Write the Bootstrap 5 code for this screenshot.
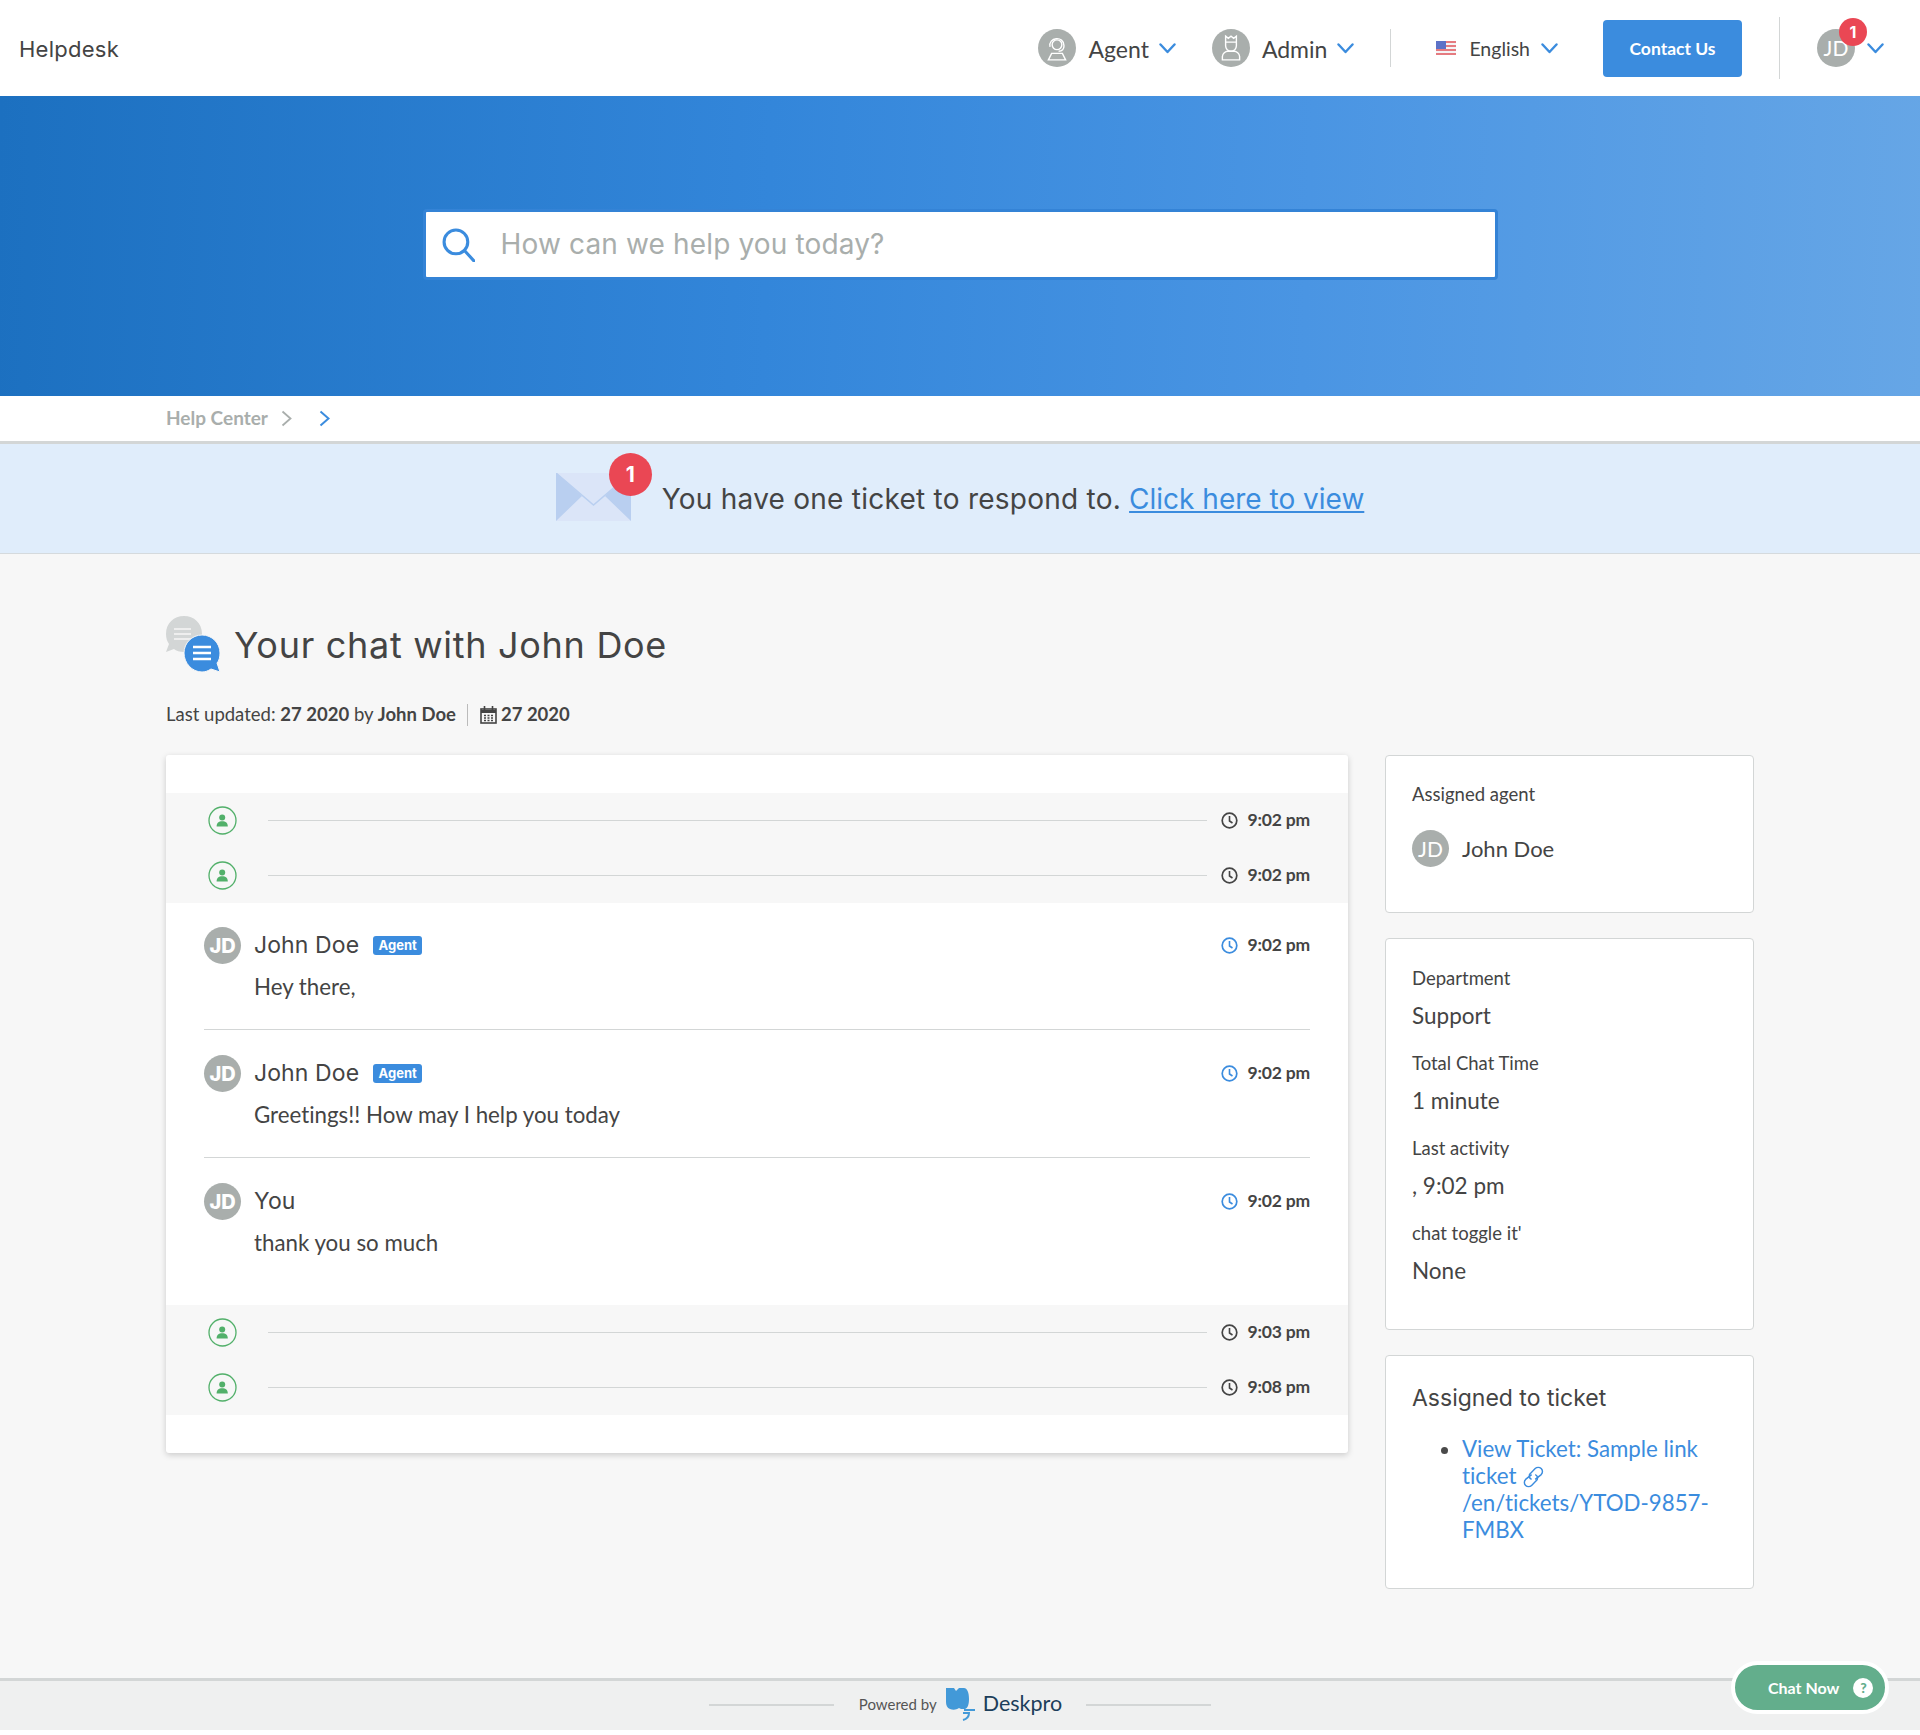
<!DOCTYPE html>
<html lang="en">
<head>
<meta charset="utf-8">
<title>Helpdesk</title>
<link href="https://cdn.jsdelivr.net/npm/bootstrap@5.3.0/dist/css/bootstrap.min.css" rel="stylesheet">
<style>
:root{--blue:#3b8cde;--ink:#4a4a4a;--grey:#a9aeac;--rule:#d3d6d6}
html,body{background:#fff}
body{font-family:"Lato","Liberation Sans",sans-serif;color:var(--ink);font-size:18px;position:relative;height:1735px;overflow:hidden;font-variant-ligatures:none}
.rub{font-family:"Inter","Open Sans",sans-serif}
a{color:var(--blue)}
.topbar{height:96px;background:#fff;padding:0 36px 0 19px}
.brand-name{font-size:22px;font-weight:400;color:#444;letter-spacing:.25px;margin-top:2px}
.ava{width:38px;height:38px;border-radius:50%;background:var(--grey);color:#fff;flex:none;font-size:21px}
.ava svg{width:28px;height:28px}
.navtxt{font-size:23px;color:#444;margin:2px 0 0 12px}
.chev{width:17px;height:11px;flex:none;margin-left:10px}
.vr-line{width:1px;background:var(--rule);flex:none}
.btn-contact{background:var(--blue);color:#fff;font-weight:700;font-size:17.500px;width:139px;height:57px;border:0;border-radius:4px;padding:2px 0 0}
.redb{background:#ea4754;color:#fff;border-radius:50%;font-weight:700;font-family:"Inter",sans-serif}
.hero{height:300px;background:linear-gradient(92deg,#1c70c0 0%,#3386da 40%,#4a95e3 68%,#66a6e6 100%);padding-top:113px}
.searchbox{width:1075px;height:71px;background:#fff;border:3px solid #3483d6;border-radius:4px;margin:0 auto;padding-left:16px}
.searchbox span{font-size:28px;letter-spacing:.15px;color:#a9aeac;margin:0 0 2px 26px}
.crumbs{height:48px;background:#fff;border-bottom:3px solid var(--rule);padding-left:166px;font-weight:700;font-size:19px;color:#a9aeac}
.notice{height:110px;background:#e0edfb;border-bottom:1px solid #d5dadd;font-size:28px;color:#444}
.notice a{margin-left:8px}
.noticetext{letter-spacing:.25px}
.mailwrap{width:96px;height:68px;margin:0 10px 23px 0;position:relative}
.mailwrap .redb{position:absolute;right:0;top:0;width:43px;height:43px;font-size:21px}
.pagebody{background:#f7f7f7;height:1124px;padding:62px 166px 0}
.pagetitle{font-size:36px;letter-spacing:.7px;font-weight:400;color:#444;margin:2px 0 0 13px;line-height:1}
.metaline{margin-top:30px;height:26px;font-size:18.500px;color:#444}
.metaline b{font-weight:700}
.metasep{width:1px;height:22px;background:#bbb;margin:0 12px 0 11px}
.cols{margin-top:27px;gap:37px}
.chatcard{width:1182px;height:698px;background:#fff;padding:38px 0;box-shadow:0 2px 6px rgba(0,0,0,.18);border-radius:3px;flex:none}
.sysband{background:#f7f7f7;padding:0 38px}
.sysrow{height:55px}
.greenico{width:29px;height:29px;margin-left:4px;flex:none}
.sysline{flex:1;height:1px;background:#d3d6d6;margin:0 14px 0 31px}
.stamp{font-size:17.500px;font-weight:700;color:#444;letter-spacing:-.2px;white-space:nowrap}
.stamp svg{width:17px;height:17px;margin-right:10px;vertical-align:-3px}
.msgrow{margin:0 38px 1px;height:127px;padding-top:24px;border-bottom:1px solid #d3d6d6}
.msgrow.endrow{border-bottom:0;height:145px}
.msgava{width:37px;height:37px;border-radius:50%;background:var(--grey);color:#fff;font-weight:800;font-size:20px;flex:none;font-family:"Inter",sans-serif}
.msgname{font-size:23px;margin-left:13px;color:#444;letter-spacing:.1px}
.agenttag{background:var(--blue);color:#fff;font-weight:700;font-size:13px;border-radius:3px;width:49px;height:19px;margin-left:14px;font-family:"Inter",sans-serif}
.msgtext{font-size:22.300px;margin:9px 0 0 50px;line-height:28px;color:#444}
.sidecol{width:369px;flex:none;gap:25px}
.sidecard{background:#fff;border:1px solid #d3d6d6;border-radius:4px;padding:26px;margin:0}
.sidecard-tall{padding-top:27px}
.sidelabel{font-size:18.500px;color:#444;line-height:24px}
.sideval{font-size:22.500px;color:#444;line-height:28px;margin:12px 0 21px}
.sidehead{font-size:23px;font-weight:400;color:#444;margin:2px 0 23px;line-height:28px}
.ticketlist{margin:0;padding-left:50px;font-size:22.300px;line-height:27px}
.ticketlist a{text-decoration:none}
.pagefoot{height:52px;background:#eff0f0;border-top:3px solid var(--rule);font-size:15px;color:#555;padding-bottom:2px}
.footline{width:125px;height:2px;background:#d3d6d6}
.deskword{font-size:21.500px;color:#1c3e5a;margin:0 0 2px 7px}
.chatpill{position:absolute;left:1731px;top:1661px;width:158px;height:53px;background:#63ae8c;border:4px solid #fff;border-radius:27px;color:#fff;font-weight:700;font-size:16px;padding-left:33px;box-sizing:border-box}
.qmark{width:20px;height:20px;border-radius:50%;background:#fff;color:#63ae8c;font-size:14px;font-weight:900;margin-left:14px}
</style>
</head>
<body>
<svg width="0" height="0" class="d-block position-absolute">
  <defs>
    <symbol id="chev" viewBox="0 0 17 11"><path d="M1.500 1.500 8.500 9l7-7.500" fill="none" stroke="#3b8cde" stroke-width="2.400" stroke-linecap="round" stroke-linejoin="round"/></symbol>
    <symbol id="clock" viewBox="0 0 17 17"><circle cx="8.500" cy="8.500" r="7.300" fill="none" stroke="currentColor" stroke-width="1.700"/><path d="M8.500 4v5l3 2" fill="none" stroke="currentColor" stroke-width="1.600"/></symbol>
    <symbol id="person" viewBox="0 0 29 29"><circle cx="14.500" cy="14.500" r="13.500" fill="none" stroke="#52b06a" stroke-width="1.300"/><circle cx="14.200" cy="11.500" r="3" fill="#52b06a"/><path d="M8.600 20.500c0-3.500 2-5.200 5.600-5.200s5.600 1.700 5.600 5.200z" fill="#52b06a"/></symbol>
  </defs>
</svg>

<header class="topbar d-flex align-items-center">
  <div class="brand-name rub">Helpdesk</div>
  <div class="ms-auto d-flex align-items-center h-100">
    <div class="ava d-flex align-items-center justify-content-center">
      <svg viewBox="0 0 26 26" fill="none" stroke="#fff" stroke-width="1.300"><circle cx="13" cy="10" r="4.500"/><path d="M6.500 12c-2-9 13-11 13-1 0 3-2 5-5 5"/><path d="M8 18h10l3 6H5z"/></svg>
    </div>
    <span class="navtxt">Agent</span>
    <svg class="chev"><use href="#chev"/></svg>
    <div class="ava d-flex align-items-center justify-content-center" style="margin-left:36px">
      <svg viewBox="0 0 26 26" fill="none" stroke="#fff" stroke-width="1.300"><path d="M8 2l2.500 2L13 2l2.500 2L18 2v9a5 5 0 0 1-10 0zM8 7.500h10"/><path d="M5 24v-3c0-3 3-5 5-5h6c2 0 5 2 5 5v3z"/></svg>
    </div>
    <span class="navtxt">Admin</span>
    <svg class="chev"><use href="#chev"/></svg>
    <div class="vr-line" style="height:38px;margin:0 45px 0 36px"></div>
    <svg width="20" height="14" viewBox="0 0 20 14"><rect width="20" height="14" fill="#f4f4f6"/><path d="M0 1h20M0 5h20M0 9h20M0 13h20" stroke="#e57b80" stroke-width="1.800"/><rect width="10" height="8" fill="#5c72c7"/></svg>
    <span style="font-size:19.500px;margin:2px 0 0 13px;color:#444">English</span>
    <svg class="chev" style="margin-left:11px"><use href="#chev"/></svg>
    <button class="btn btn-contact d-flex align-items-center justify-content-center" style="margin-left:45px">Contact Us</button>
    <div class="vr-line" style="height:62px;margin:0 37px 0 37px"></div>
    <div class="ava d-flex align-items-center justify-content-center position-relative">JD
      <span class="redb position-absolute d-flex align-items-center justify-content-center" style="width:28px;height:28px;left:22px;top:-11px;font-size:16px">1</span>
    </div>
    <svg class="chev" style="margin-left:12px"><use href="#chev"/></svg>
  </div>
</header>

<section class="hero">
  <div class="searchbox d-flex align-items-center">
    <svg width="33" height="34" viewBox="0 0 32 33" fill="none" stroke="#3b8cde" stroke-width="3"><circle cx="13.500" cy="13.500" r="11.500"/><path d="M22 22l9 10" stroke-linecap="round"/></svg>
    <span class="rub">How can we help you today?</span>
  </div>
</section>

<nav class="crumbs d-flex align-items-center">
  <span>Help Center</span>
  <svg width="11" height="17" viewBox="0 0 11 17" style="margin-left:13px" fill="none" stroke="#a9aeac" stroke-width="1.800"><path d="M1.500 1.500l8 7-8 7"/></svg>
  <svg width="11" height="17" viewBox="0 0 11 17" fill="none" stroke="#3b8cde" stroke-width="2" style="margin-left:27px"><path d="M1.500 1.500l8 7-8 7"/></svg>
</nav>

<section class="notice d-flex align-items-center justify-content-center">
  <div class="mailwrap">
    <svg width="75" height="48" viewBox="0 0 75 48" class="position-absolute" style="left:0;top:20px"><rect width="75" height="48" fill="#dbe5f8"/><path d="M0 0l37.500 32L75 0" fill="none" stroke="#b9cff0" stroke-width="1.500"/><path d="M0 48V0l26 23zM75 48V0L49 23z" fill="#b9cff0"/></svg>
    <span class="redb d-flex align-items-center justify-content-center">1</span>
  </div>
  <span class="rub noticetext">You have one ticket to respond to.</span><a href="#" class="rub">Click here to view</a>
</section>

<main class="pagebody">
  <div class="d-flex align-items-center">
    <svg width="55" height="56" viewBox="0 0 55 56"><path d="M18 0c10 0 18 7 18 18s-8 18-18 18c-4 0-8-1-10-3l-8 3 3-8c-2-3-3-6-3-10C0 7 8 0 18 0z" fill="#d3d6d6"/><path d="M8 13h17M8 18h17M8 23h17" stroke="#eee" stroke-width="2"/><path d="M36 19c10 0 18 8 18 18 0 4-1 8-3 10l3 9-9-3c-3 2-6 3-9 3-10 0-18-9-18-19s8-18 18-18z" fill="#3b8cde" stroke="#f7f7f7" stroke-width="1"/><path d="M27 31h18M27 37h18M27 43h18" stroke="#fff" stroke-width="2.500"/></svg>
    <h1 class="pagetitle rub">Your chat with John Doe</h1>
  </div>
  <div class="metaline d-flex align-items-center">
    <span>Last updated: <b>27 2020</b> by <b>John Doe</b></span>
    <span class="metasep"></span>
    <svg width="17" height="18" viewBox="0 0 17 18" fill="none" stroke="#444" stroke-width="1.600"><rect x="1" y="3" width="15" height="14"/><path d="M1 5.500h15" stroke-width="3"/><path d="M4.500 0v4M12.500 0v4"/><path d="M4 9.500h9M4 12h9M4 14.500h9" stroke-dasharray="2 1.500"/></svg>
    <b class="ms-1">27 2020</b>
  </div>

  <div class="cols d-flex align-items-start">
    <div class="chatcard">
      <div class="sysband">
        <div class="sysrow d-flex align-items-center"><svg class="greenico"><use href="#person"/></svg><div class="sysline"></div><span class="stamp"><svg><use href="#clock"/></svg>9:02 pm</span></div>
        <div class="sysrow d-flex align-items-center"><svg class="greenico"><use href="#person"/></svg><div class="sysline"></div><span class="stamp"><svg><use href="#clock"/></svg>9:02 pm</span></div>
      </div>
      <div class="msgrow">
        <div class="d-flex align-items-center"><div class="msgava d-flex align-items-center justify-content-center">JD</div><span class="msgname rub">John Doe</span><span class="agenttag d-flex align-items-center justify-content-center">Agent</span><span class="stamp ms-auto"><svg style="color:#3b8cde"><use href="#clock"/></svg>9:02 pm</span></div>
        <div class="msgtext">Hey there,</div>
      </div>
      <div class="msgrow">
        <div class="d-flex align-items-center"><div class="msgava d-flex align-items-center justify-content-center">JD</div><span class="msgname rub">John Doe</span><span class="agenttag d-flex align-items-center justify-content-center">Agent</span><span class="stamp ms-auto"><svg style="color:#3b8cde"><use href="#clock"/></svg>9:02 pm</span></div>
        <div class="msgtext">Greetings!! How may I help you today</div>
      </div>
      <div class="msgrow endrow">
        <div class="d-flex align-items-center"><div class="msgava d-flex align-items-center justify-content-center">JD</div><span class="msgname rub">You</span><span class="stamp ms-auto"><svg style="color:#3b8cde"><use href="#clock"/></svg>9:02 pm</span></div>
        <div class="msgtext">thank you so much</div>
      </div>
      <div class="sysband">
        <div class="sysrow d-flex align-items-center"><svg class="greenico"><use href="#person"/></svg><div class="sysline"></div><span class="stamp"><svg><use href="#clock"/></svg>9:03 pm</span></div>
        <div class="sysrow d-flex align-items-center"><svg class="greenico"><use href="#person"/></svg><div class="sysline"></div><span class="stamp"><svg><use href="#clock"/></svg>9:08 pm</span></div>
      </div>
    </div>

    <aside class="sidecol d-flex flex-column">
      <div class="sidecard" style="height:158px">
        <div class="sidelabel">Assigned agent</div>
        <div class="d-flex align-items-center" style="margin-top:24px">
          <div class="ava d-flex align-items-center justify-content-center" style="width:37px;height:37px">JD</div>
          <span style="font-size:22px;margin-left:13px;color:#444">John Doe</span>
        </div>
      </div>
      <div class="sidecard sidecard-tall" style="height:392px">
        <div class="sidelabel">Department</div><div class="sideval">Support</div>
        <div class="sidelabel">Total Chat Time</div><div class="sideval">1 minute</div>
        <div class="sidelabel">Last activity</div><div class="sideval">, 9:02 pm</div>
        <div class="sidelabel">chat toggle it'</div><div class="sideval">None</div>
      </div>
      <div class="sidecard" style="height:234px">
        <h2 class="sidehead rub">Assigned to ticket</h2>
        <ul class="ticketlist">
          <li><a href="#">View Ticket: Sample link ticket <svg width="24" height="22" viewBox="1 1 20 18" fill="none" stroke="#3b8cde" stroke-width="1.200" style="vertical-align:-4px"><path d="M9 8 4 12a3.500 3.500 0 0 0 5 5l4-4a3 3 0 0 0-1-5"/><path d="M12 12l5-4a3.500 3.500 0 0 0-5-5L8 7a3 3 0 0 0 1 5"/></svg><br>/en/tickets/YTOD-9857-FMBX</a></li>
        </ul>
      </div>
    </aside>
  </div>
</main>

<footer class="pagefoot d-flex align-items-center justify-content-center">
  <span class="footline"></span>
  <span style="margin-left:25px">Powered by</span>
  <svg width="30" height="33" viewBox="0 0 30 33" style="margin-left:9px"><path d="M0 0h8l2 3 3-3h5c3 0 5 4 5 11 0 5-1 9-4 10l-4 0-2-1c-3 2-6 2-9 1-3-1-4-4-4-7z" fill="#4299d8"/><path d="M18 22h11M17 25h6c0 4-2 6-6 7" fill="none" stroke="#4299d8" stroke-width="2"/></svg>
  <span class="deskword">Deskpro</span>
  <span class="footline" style="margin-left:24px"></span>
</footer>

<div class="chatpill d-flex align-items-center">Chat Now<span class="qmark d-flex align-items-center justify-content-center">?</span></div>

<script src="https://cdn.jsdelivr.net/npm/bootstrap@5.3.0/dist/js/bootstrap.bundle.min.js"></script>
</body>
</html>
